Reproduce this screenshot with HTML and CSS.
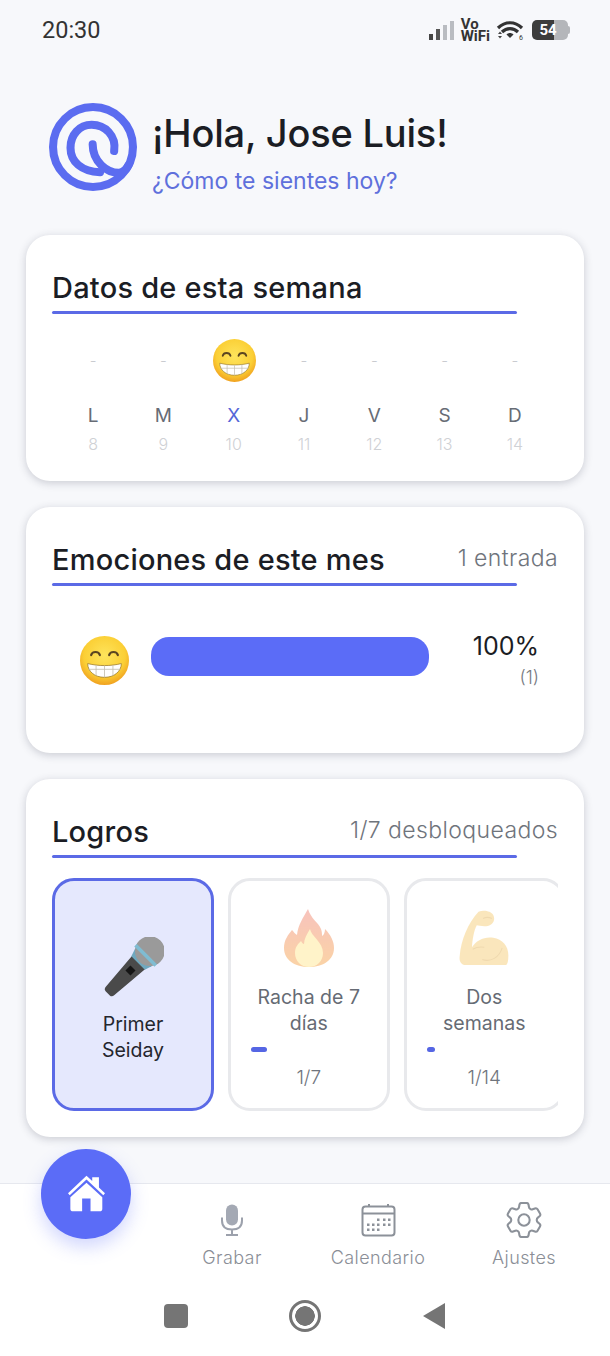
FILE: index.html
```html
<!DOCTYPE html>
<html lang="es">
<head>
  <meta charset="UTF-8">
  <meta name="viewport" content="width=device-width, initial-scale=1.0">
  <title>Inicio</title>
  <link rel="stylesheet" href="styles.css">
</head>
<body>
  <svg class="defs" width="0" height="0" aria-hidden="true">
    <defs>
      <radialGradient id="grin-fill" cx="50%" cy="40%" r="62%">
        <stop offset="0%" stop-color="#fee45c"/>
        <stop offset="68%" stop-color="#fbcf35"/>
        <stop offset="100%" stop-color="#ef9c1d"/>
      </radialGradient>
      <linearGradient id="flame-fill" x1="0" y1="0" x2="0" y2="1">
        <stop offset="0%" stop-color="#ee6a5a"/>
        <stop offset="100%" stop-color="#f59322"/>
      </linearGradient>
      <symbol id="grin" viewBox="0 0 64 64">
        <circle cx="32" cy="32" r="32" fill="url(#grin-fill)"/>
        <path d="M14.500 25c1.500-5.500 10-5.500 11.500 0M38 25c1.500-5.500 10-5.500 11.500 0" fill="none" stroke="#5b4520" stroke-width="2.800" stroke-linecap="round"/>
        <path d="M10 36c14 3.500 30 3.500 44 0 0 10-9 18-22 18S10 46 10 36z" fill="#fff" stroke="#9a7a2a" stroke-width="1"/>
        <path d="M11 43.500h42M21 38v14M32 39v15M43 38v14" stroke="#c4bfb0" stroke-width="1.100" fill="none"/>
      </symbol>
    </defs>
  </svg>

  <div class="status-bar">
    <span class="clock">20:30</span>
    <div class="status-icons">
      <svg class="signal" width="27" height="21" viewBox="0 0 27 21">
        <rect x="1" y="14" width="4" height="6" fill="#444"/>
        <rect x="8" y="9" width="4" height="11" fill="#555"/>
        <rect x="15" y="5" width="4" height="15" fill="#b9bcc1"/>
        <rect x="22" y="1" width="4" height="19" fill="#b9bcc1"/>
      </svg>
      <span class="vowifi">Vo<br>WiFi</span>
      <svg class="wifi" width="29" height="22" viewBox="0 0 29 22">
        <path d="M2 9c7-7 17-7 24 0M6 13c4.500-4.500 11.500-4.500 16 0" fill="none" stroke="#333" stroke-width="3.200"/>
        <path d="M10.500 15.500c2-2 5-2 7 0L14 19z" fill="#333"/>
        <path d="M2 15l2-2.500L6 15zM2 17l2 2.500L6 17z" fill="#444"/>
        <text x="23" y="21" class="wifi-six">6</text>
      </svg>
      <div class="battery"><span class="battery-level">54</span><i class="battery-cap"></i></div>
    </div>
  </div>

  <header class="greeting">
    <svg class="logo" width="88" height="88" viewBox="28 25 262 262">
      <g fill="none" stroke="#5b6cf0" stroke-width="24" stroke-linecap="round">
        <circle cx="159" cy="156" r="119"/>
        <path d="M222 168C229 122 195 90 155 90C118 90 92 120 92 158C92 200 125 229 180 231"/>
        <path d="M158 148C158 200 200 233 236 233C250 233 258 222 265 210"/>
      </g>
    </svg>
    <div>
      <h1 class="greeting-title">¡Hola, Jose Luis!</h1>
      <p class="greeting-sub">¿Cómo te sientes hoy?</p>
    </div>
  </header>

  <main class="cards">
    <section class="card">
      <div class="card-head">
        <h2 class="card-title">Datos de esta semana</h2>
      </div>
      <div class="card-rule"></div>
      <div class="week">
        <div class="day"><span class="day-mood">-</span><span class="day-letter">L</span><span class="day-num">8</span></div>
        <div class="day"><span class="day-mood">-</span><span class="day-letter">M</span><span class="day-num">9</span></div>
        <div class="day"><span class="day-mood"><svg width="43" height="43"><use href="#grin"/></svg></span><span class="day-letter today">X</span><span class="day-num">10</span></div>
        <div class="day"><span class="day-mood">-</span><span class="day-letter">J</span><span class="day-num">11</span></div>
        <div class="day"><span class="day-mood">-</span><span class="day-letter">V</span><span class="day-num">12</span></div>
        <div class="day"><span class="day-mood">-</span><span class="day-letter">S</span><span class="day-num">13</span></div>
        <div class="day"><span class="day-mood">-</span><span class="day-letter">D</span><span class="day-num">14</span></div>
      </div>
    </section>

    <section class="card">
      <div class="card-head">
        <h2 class="card-title">Emociones de este mes</h2>
        <span class="card-note">1 entrada</span>
      </div>
      <div class="card-rule"></div>
      <div class="emotion">
        <svg class="emotion-face" width="49" height="49"><use href="#grin"/></svg>
        <div class="emotion-bar"></div>
        <div class="emotion-stats">
          <div class="emotion-pct">100%</div>
          <div class="emotion-count">(1)</div>
        </div>
      </div>
    </section>

    <section class="card">
      <div class="card-head">
        <h2 class="card-title">Logros</h2>
        <span class="card-note">1/7 desbloqueados</span>
      </div>
      <div class="card-rule"></div>
      <div class="badges">
        <div class="badge unlocked">
          <svg class="badge-icon" width="62" height="62" viewBox="5 5 52 52">
            <g transform="rotate(45 31 31)">
              <path d="M23 22h16l-3 36q-.2 3-2.500 3h-5q-2.300 0-2.500-3z" fill="#4a4a4a"/>
              <rect x="28" y="31" width="6" height="6" fill="#151515"/>
              <path d="M21 14h20v5l-2 6H23l-2-6z" fill="#6fa8bf"/>
              <circle cx="31" cy="11" r="12.500" fill="#9a9a9a"/>
              <path d="M19 16h24" stroke="#7fbcd2" stroke-width="3"/>
            </g>
          </svg>
          <div class="badge-name">Primer Seiday</div>
        </div>
        <div class="badge">
          <svg class="badge-icon locked" width="50" height="58" viewBox="0 0 50 58">
            <path d="M24 0c3 10 10 13 13 20 1 3 1 5 1 7 2-1 3-4 3-7 6 6 9 13 9 19 0 12-11 19-25 19S0 51 0 39c0-8 4-13 8-18 2 2 3 4 5 5 1-10 6-17 11-26z" fill="url(#flame-fill)"/>
            <path d="M26 20c1 7 13 13 13 24 0 8-6 14-14 14s-14-6-14-14c0-6 3-9 6-12 1 2 2 3 3 3 0-5 3-10 6-15z" fill="#ffe27a"/>
          </svg>
          <div class="badge-name">Racha de 7 días</div>
          <div class="badge-track"><div class="badge-fill" style="width: 16px"></div></div>
          <div class="badge-progress">1/7</div>
        </div>
        <div class="badge">
          <svg class="badge-icon locked" width="50" height="56" viewBox="478 148 146 162">
            <path d="M535 152C550 146 572 150 578 162C584 174 580 188 562 194C548 197 535 192 530 192C522 205 517 235 516 256C528 236 552 224 578 228C606 232 624 254 622 284C622 296 620 304 616 308H494C484 306 478 296 480 282C484 234 504 186 535 152Z" fill="#f5c35a"/>
            <path d="M518 262C528 256 540 254 552 256M546 292C570 300 596 286 604 258M548 172C556 168 566 168 574 172" fill="none" stroke="#d9a23a" stroke-width="3"/>
          </svg>
          <div class="badge-name">Dos semanas</div>
          <div class="badge-track"><div class="badge-fill" style="width: 8px"></div></div>
          <div class="badge-progress">1/14</div>
        </div>
      </div>
    </section>
  </main>

  <footer class="bottom">
    <button class="home-btn" aria-label="Inicio">
      <svg width="39" height="37" viewBox="140 105 116 110">
        <path d="M215 112h20v30l18 17-5 6-50-47-50 47-5-6 55-52 17 16z" fill="#fff"/>
        <path d="M198 128l47 43v34q0 8-8 8h-27v-38h-25v38h-27q-8 0-8-8v-34z" fill="#fff"/>
      </svg>
    </button>
    <nav class="tabs">
      <div class="tab"></div>
      <div class="tab">
        <svg class="tab-icon" width="24" height="33" viewBox="0 0 24 33">
          <rect x="6" y="1" width="12" height="21" rx="6" fill="#a4a9b4"/>
          <path d="M2 14v3c0 6 4 9 10 9s10-3 10-9v-3M12 26v5M6 31.500h12" fill="none" stroke="#9ca1ac" stroke-width="2"/>
        </svg>
        <span class="tab-label">Grabar</span>
      </div>
      <div class="tab">
        <svg class="tab-icon" width="35" height="33" viewBox="0 0 35 33">
          <g fill="none" stroke="#8c9199" stroke-width="2">
            <rect x="1.500" y="3" width="32" height="29" rx="3"/>
            <path d="M1.500 10h32M8 0.500v3M27 0.500v3"/>
          </g>
          <g fill="#8c9199">
            <rect x="16" y="15" width="2.500" height="2.500"/><rect x="22" y="15" width="2.500" height="2.500"/><rect x="27" y="15" width="2.500" height="2.500"/>
            <rect x="6" y="20" width="2.500" height="2.500"/><rect x="11" y="20" width="2.500" height="2.500"/><rect x="16" y="20" width="2.500" height="2.500"/><rect x="22" y="20" width="2.500" height="2.500"/><rect x="27" y="20" width="2.500" height="2.500"/>
            <rect x="6" y="25" width="2.500" height="2.500"/><rect x="11" y="25" width="2.500" height="2.500"/><rect x="16" y="25" width="2.500" height="2.500"/>
          </g>
        </svg>
        <span class="tab-label">Calendario</span>
      </div>
      <div class="tab">
        <svg class="tab-icon" width="36" height="36" viewBox="2.500 2.500 19 19" fill="none" stroke="#8c9199" stroke-width="1.100">
          <path stroke-linecap="round" stroke-linejoin="round" d="M9.594 3.94c.09-.542.56-.94 1.11-.94h2.593c.55 0 1.02.398 1.11.94l.213 1.281c.063.374.313.686.645.87.074.04.147.083.22.127.325.196.72.257 1.075.124l1.217-.456a1.125 1.125 0 0 1 1.37.49l1.296 2.247a1.125 1.125 0 0 1-.26 1.431l-1.003.827c-.293.241-.438.613-.43.992a7.723 7.723 0 0 1 0 .255c-.008.378.137.75.43.991l1.004.827c.424.35.534.955.26 1.43l-1.298 2.247a1.125 1.125 0 0 1-1.369.491l-1.217-.456c-.355-.133-.75-.072-1.076.124a6.47 6.47 0 0 1-.22.128c-.331.183-.581.495-.644.869l-.213 1.281c-.09.543-.56.94-1.11.94h-2.594c-.55 0-1.019-.398-1.11-.94l-.213-1.281c-.062-.374-.312-.686-.644-.87a6.52 6.52 0 0 1-.22-.127c-.325-.196-.72-.257-1.076-.124l-1.217.456a1.125 1.125 0 0 1-1.369-.49l-1.297-2.247a1.125 1.125 0 0 1 .26-1.431l1.004-.827c.292-.24.437-.613.43-.991a6.932 6.932 0 0 1 0-.255c.007-.38-.138-.751-.43-.992l-1.004-.827a1.125 1.125 0 0 1-.26-1.43l1.297-2.247a1.125 1.125 0 0 1 1.37-.491l1.216.456c.356.133.751.072 1.076-.124.072-.044.146-.086.22-.128.332-.183.582-.495.644-.869l.214-1.28Z"/>
          <circle cx="12" cy="12" r="3"/>
        </svg>
        <span class="tab-label">Ajustes</span>
      </div>
    </nav>
    <div class="system-nav">
      <span class="sys-square"></span>
      <span class="sys-circle"></span>
      <svg width="24" height="28" viewBox="0 0 24 28"><path d="M23 1v26L1 14z" fill="#757575"/></svg>
    </div>
  </footer>
</body>
</html>
```

FILE: styles.css
```css
* {
  box-sizing: border-box;
}

body {
  font-family: Inter, "Noto Sans", sans-serif;
  margin: 0;
  width: 610px;
  height: 1356px;
  overflow: hidden;
  background-color: #f7f8fb;
  display: flex;
  flex-direction: column;
  color: #1b1d24;
}

.defs {
  position: absolute;
}

.status-bar {
  height: 60px;
  padding: 0 40px 0 42px;
  display: flex;
  align-items: center;
  justify-content: space-between;
}

.clock {
  font-family: Roboto, sans-serif;
  font-size: 23.500px;
  color: #333;
}

.status-icons {
  display: flex;
  align-items: center;
  gap: 6px;
}

.vowifi {
  font-family: Roboto, sans-serif;
  font-size: 15px;
  font-weight: 700;
  line-height: 12px;
  color: #333;
}

.wifi-six {
  font-family: Roboto, sans-serif;
  font-size: 7px;
  fill: #333;
}

.battery {
  display: flex;
  align-items: center;
  width: 36px;
  height: 20px;
  margin-left: 1px;
  margin-right: 2px;
  border-radius: 5px;
  background: linear-gradient(90deg, #3d3d3d 60%, #b4b6ba 60%);
  position: relative;
}

.battery-level {
  width: 32px;
  text-align: center;
  color: #fff;
  font-family: Roboto, sans-serif;
  font-size: 15px;
  font-weight: 700;
}

.battery-cap {
  position: absolute;
  right: -2px;
  top: 6px;
  width: 2px;
  height: 8px;
  background-color: #b4b6ba;
  border-radius: 0 2px 2px 0;
}

.greeting {
  display: flex;
  gap: 15px;
  padding: 43px 0 0 49px;
  height: 175px;
}

.logo {
  flex-shrink: 0;
}

.greeting-title {
  margin: 6px 0 0;
  font-size: 38px;
  line-height: 48px;
  font-weight: 500;
  letter-spacing: -0.200px;
}

.greeting-sub {
  margin: 8px 0 0;
  font-size: 23px;
  line-height: 32px;
  color: #5f70dc;
}

.cards {
  display: flex;
  flex-direction: column;
  gap: 26px;
  padding: 0 26px;
}

.card {
  background-color: #fff;
  border-radius: 24px;
  box-shadow: 0 2px 8px rgba(40, 45, 70, 0.22);
  padding: 33px 26px 0;
  height: 246px;
}

.card:last-child {
  height: 358px;
}

.card-head {
  display: flex;
  justify-content: space-between;
  align-items: flex-start;
  height: 40px;
}

.card-title {
  margin: 1px 0 0;
  font-size: 29px;
  line-height: 38px;
  font-weight: 500;
  letter-spacing: 0.220px;
}

.card-note {
  font-size: 23px;
  line-height: 36px;
  font-weight: 300;
  letter-spacing: 0.400px;
  color: #6f747c;
}

.card-rule {
  width: 465px;
  height: 3px;
  margin-top: 3px;
  background-color: #5b6ae6;
  border-radius: 2px;
}

.week {
  display: grid;
  grid-template-columns: repeat(7, 1fr);
  margin: 22px 8px 0 6px;
}

.day {
  display: flex;
  flex-direction: column;
  align-items: center;
}

.day-mood {
  height: 48px;
  display: flex;
  align-items: center;
  color: #c9cbd0;
  font-size: 15px;
  font-weight: 300;
}

.day-mood svg {
  margin-left: 2px;
}

.day-letter {
  margin-top: 20px;
  font-size: 19px;
  line-height: 24px;
  font-weight: 400;
  color: #676c75;
}

.today {
  color: #5566d8;
}

.day-num {
  margin-top: 5px;
  font-size: 16px;
  line-height: 22px;
  font-weight: 300;
  color: #cfd1d5;
}

.emotion {
  display: flex;
  align-items: flex-start;
  margin-top: 48px;
  padding: 0 19px 0 28px;
}

.emotion-face {
  margin: 2px 22px 0 0;
  flex-shrink: 0;
}

.emotion-bar {
  flex: 1;
  height: 39px;
  margin-top: 3px;
  background-color: #5b6cf7;
  border-radius: 18px;
}

.emotion-stats {
  width: 110px;
  margin-top: -3px;
  text-align: right;
}

.emotion-pct {
  font-size: 25px;
  line-height: 30px;
  color: #1b1d24;
}

.emotion-count {
  margin-top: 6px;
  font-size: 18px;
  line-height: 22px;
  font-weight: 300;
  color: #777b82;
}

.badges {
  display: flex;
  gap: 14px;
  width: 506px;
  margin-top: 20px;
  overflow: hidden;
}

.badge {
  flex: 0 0 161.500px;
  height: 233px;
  padding: 28px 20px 0;
  border: 3px solid #e8e9ec;
  border-radius: 22px;
  background-color: #fff;
  display: flex;
  flex-direction: column;
  align-items: center;
  text-align: center;
}

.badge.unlocked {
  flex-basis: 162px;
  justify-content: center;
  padding: 10px 20px 0;
  background-color: #e5e8fd;
  border-color: #5b6ae6;
}

.badge-icon {
  flex-shrink: 0;
  height: 58px;
}

.badge-icon.locked {
  opacity: 0.4;
}

.badge.unlocked .badge-icon {
  height: 62px;
  margin-bottom: 12px;
}

.badge-name {
  margin-top: 17px;
  font-size: 19.500px;
  line-height: 26px;
  color: #666b74;
}

.badge.unlocked .badge-name {
  margin-top: 0;
  color: #24262e;
}

.badge-track {
  align-self: stretch;
  height: 5px;
  margin-top: 11px;
}

.badge-fill {
  height: 5px;
  background-color: #5566e4;
  border-radius: 3px;
}

.badge-progress {
  margin-top: 14px;
  font-size: 19px;
  line-height: 24px;
  font-weight: 300;
  color: #6f747c;
}

.bottom {
  position: absolute;
  left: 0;
  right: 0;
  bottom: 0;
  height: 173px;
  background-color: #fff;
  border-top: 1px solid #e6e8ee;
}

.home-btn {
  position: absolute;
  left: 41px;
  top: -35px;
  width: 90px;
  height: 90px;
  border: none;
  border-radius: 50%;
  background-color: #5b6cf7;
  box-shadow: 0 8px 18px rgba(91, 108, 247, 0.28);
  display: flex;
  align-items: center;
  justify-content: center;
  padding: 0 0 2px;
}

.tabs {
  display: grid;
  grid-template-columns: repeat(4, 146px);
  padding: 18px 13px 0;
  height: 100px;
}

.tab {
  display: flex;
  flex-direction: column;
  align-items: center;
}

.tab-icon {
  height: 36px;
}

.tab-label {
  margin-top: 8px;
  font-size: 18px;
  line-height: 24px;
  font-weight: 300;
  letter-spacing: 0.400px;
  color: #8a8e96;
}

.system-nav {
  display: flex;
  align-items: center;
  height: 63px;
  padding: 0 0 0 164px;
  gap: 101px;
}

.sys-square {
  width: 24px;
  height: 24px;
  background-color: #757575;
  border-radius: 4px;
}

.sys-circle {
  width: 32px;
  height: 32px;
  border: 3px solid #757575;
  border-radius: 50%;
  background: radial-gradient(circle, #757575 0 9.500px, #fff 10px);
}
```
